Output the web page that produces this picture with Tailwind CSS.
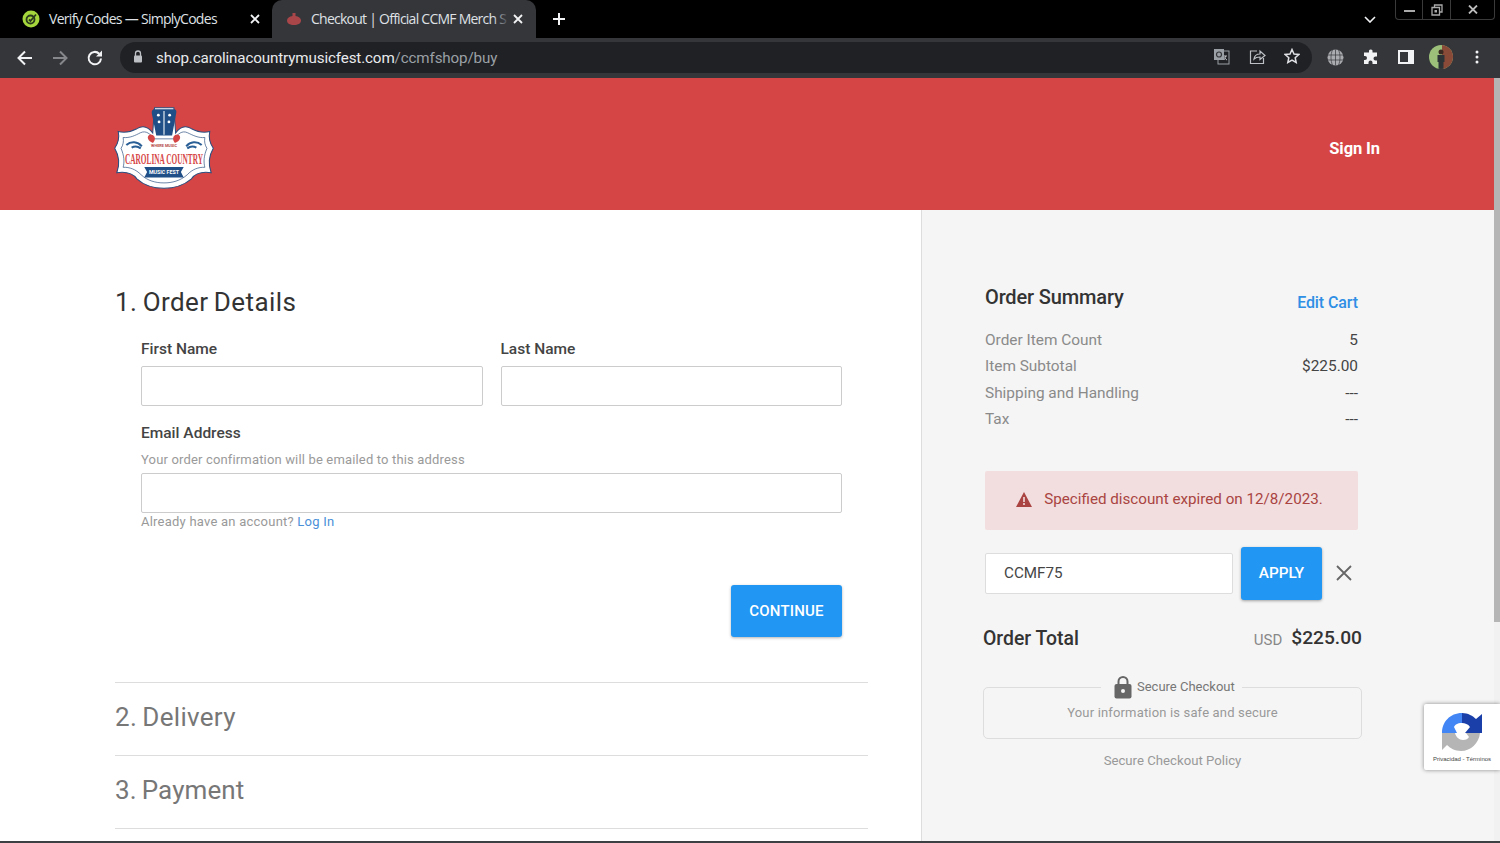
<!DOCTYPE html>
<html lang="en"><head><meta charset="utf-8"><title>Checkout</title>
<script src="https://cdn.jsdelivr.net/npm/@tailwindcss/browser@4"></script></head>
<body class="m-0 bg-white">
<div class="w-[1500px] h-[843px] overflow-hidden relative flex flex-col font-['Roboto',sans-serif]">
  <!-- tab strip -->
  <div class="h-[38px] bg-black flex items-start text-[14px] text-[#e8eaed] shrink-0 relative">
    <div class="w-[272px] h-[38px] flex items-center pl-[22px] relative">
      <svg class="w-[18px] h-[18px] mr-[9px]" viewBox="0 0 18 18"><circle cx="9" cy="9" r="8.500" fill="#a5d63c"/><circle cx="8.500" cy="9.500" r="4" fill="none" stroke="#2b3a1c" stroke-width="1.800"/><path d="M7 9.500l1.500 1.500L14 4.500" fill="none" stroke="#2b3a1c" stroke-width="1.800"/></svg>
      <span class="font-['Open_Sans',sans-serif] tracking-[-0.7px] text-[#dfe1e5] mt-[-2px]">Verify Codes — SimplyCodes</span>
      <svg class="absolute left-[250px] top-[14px] w-[10px] h-[10px]" viewBox="0 0 10 10"><path d="M1 1l8 8M9 1L1 9" stroke="#f1f3f4" stroke-width="1.800"/></svg>
    </div>
    <div class="w-[264px] h-[38px] bg-[#35363a] rounded-t-[10px] flex items-center pl-[14px] relative">
      <svg class="w-[16px] h-[14px] mr-[9px]" viewBox="0 0 16 14"><path d="M6.500 1h3v3c3 .6 5.500 2 5.500 4.500 0 3-3 4.500-7 4.500s-7-1.500-7-4.500C1 6 3.500 4.600 6.500 4z" fill="#a8464a"/></svg>
      <span class="font-['Open_Sans',sans-serif] tracking-[-0.75px] text-[#dfe1e5] whitespace-nowrap mt-[-2px]">Checkout | Official CCMF Merch S</span>
      <div class="absolute left-[221px] top-[8px] w-[16px] h-[22px] bg-gradient-to-r from-[#35363a]/0 to-[#35363a]"></div>
      <svg class="absolute left-[241px] top-[14px] w-[10px] h-[10px]" viewBox="0 0 10 10"><path d="M1 1l8 8M9 1L1 9" stroke="#f1f3f4" stroke-width="1.800"/></svg>
    </div>
    <svg class="ml-[16px] mt-[12px] w-[14px] h-[14px]" viewBox="0 0 14 14"><path d="M7 1v12M1 7h12" stroke="#f1f3f4" stroke-width="2"/></svg>
    <svg class="absolute left-[1364px] top-[16px] w-[12px] h-[7px]" viewBox="0 0 12 7"><path d="M1 1l5 5 5-5" fill="none" stroke="#f1f3f4" stroke-width="1.600"/></svg>
    <div class="absolute left-[1395px] top-0 w-[100px] h-[20px] border border-t-0 border-[#3a3a3a] rounded-b-[4px] flex">
      <div class="w-[27px] border-r border-[#3a3a3a] flex items-center justify-center"><div class="w-[11px] h-[2.500px] bg-[#aaa] mt-[3px]"></div></div>
      <div class="w-[28px] border-r border-[#3a3a3a] flex items-center justify-center"><svg class="w-[12px] h-[12px]" viewBox="0 0 12 12"><path d="M3.500 3V1h7.500v7H9M1 3.500h7.500v7.500H1z" fill="none" stroke="#aaa" stroke-width="1.300"/><rect x="3.500" y="6" width="2.500" height="2.500" fill="#aaa"/></svg></div>
      <div class="flex-1 flex items-center justify-center"><svg class="w-[10px] h-[9px]" viewBox="0 0 10 9"><path d="M1 .5l8 8M9 .5l-8 8" stroke="#bbb" stroke-width="1.800"/></svg></div>
    </div>
  </div>
  <!-- toolbar -->
  <div class="h-[40px] bg-[#35363a] shrink-0 relative flex items-center">
    <svg class="absolute left-[16px] top-[11px] w-[18px] h-[18px]" viewBox="0 0 18 18"><path d="M16 9H3M9 2.500 2.500 9 9 15.500" fill="none" stroke="#f1f3f4" stroke-width="2"/></svg>
    <svg class="absolute left-[51px] top-[11px] w-[18px] h-[18px]" viewBox="0 0 18 18"><path d="M2 9h13M9 2.500 15.500 9 9 15.500" fill="none" stroke="#85878a" stroke-width="2"/></svg>
    <svg class="absolute left-[86px] top-[11px] w-[18px] h-[18px]" viewBox="0 0 18 18"><path d="M15 9.500A6.200 6.200 0 1 1 13.200 4.700" fill="none" stroke="#f1f3f4" stroke-width="2"/><path d="M16 1.500V7.500H10z" fill="#f1f3f4"/></svg>
    <div class="absolute left-[120px] top-[4px] w-[1192px] h-[31px] bg-[#202124] rounded-full flex items-center pl-[36px]">
      <svg class="absolute left-[13px] top-[8px] w-[10px] h-[13px]" viewBox="0 0 10 13"><path d="M2.500 6V3.500a2.500 2.500 0 0 1 5 0V6" fill="none" stroke="#bdc1c6" stroke-width="1.300"/><rect x="1" y="5.500" width="8" height="7" rx="1" fill="#bdc1c6"/></svg>
      <span class="text-[15.200px] text-[#e8eaed] tracking-[-0.14px] mt-[1px]">shop.carolinacountrymusicfest.com<span class="text-[#9aa0a6]">/ccmfshop/buy</span></span>
      <svg class="absolute left-[1093px] top-[6px] w-[17px] h-[17px]" viewBox="0 0 17 17"><rect x="5" y="3" width="11" height="13" fill="none" stroke="#9aa0a6"/><rect x="1" y="1" width="10" height="11" fill="#9aa0a6"/><circle cx="6" cy="6.500" r="2.500" fill="none" stroke="#35363a" stroke-width="1.200"/><path d="M11 8h3M12.500 8c0 2-1 3.500-1.500 4M11.500 9.500c.7 1.300 1.500 2 2.500 2.500" stroke="#bdc1c6" fill="none"/></svg>
      <svg class="absolute left-[1129px] top-[6px] w-[17px] h-[17px]" viewBox="0 0 17 17"><path d="M8 3H1.500v12.500h13V10" fill="none" stroke="#bdc1c6" stroke-width="1.200"/><path d="M5 11c.5-3.500 3-5 6-5V3l5 4.500L11 11.500V9c-2.500 0-4.500.5-6 2z" fill="none" stroke="#bdc1c6" stroke-width="1.200"/></svg>
      <svg class="absolute left-[1164px] top-[6px] w-[16px] h-[16px]" viewBox="0 0 16 16"><path d="M8 1.500l2 4.500 4.800.5-3.600 3.200 1 4.800L8 12.100l-4.200 2.400 1-4.800L1.200 6.500 6 6z" fill="none" stroke="#dfe1e5" stroke-width="1.500"/></svg>
    </div>
    <svg class="absolute left-[1327px] top-[11px] w-[17px] h-[17px]" viewBox="0 0 17 17"><circle cx="8.500" cy="8.500" r="8" fill="#a9abae"/><path d="M.5 6h16M.5 11h16M5.500 1c-2 4-2 11 0 15M11.500 1c2 4 2 11 0 15M8.500 .5v16" fill="none" stroke="#35363a" stroke-width=".7"/></svg>
    <svg class="absolute left-[1363px] top-[11px] w-[16px] h-[16px]" viewBox="0 0 16 16"><path d="M6 1.500a2 2 0 0 1 3.500 0V3.500H14v4h-1.500a2 2 0 0 0 0 4H14V15H9.500v-1.500a2 2 0 0 0-4 0V15H1v-4h1a2 2 0 0 0 0-4H1V3.500h5z" fill="#f1f3f4"/></svg>
    <svg class="absolute left-[1398px] top-[12px] w-[16px] h-[14px]" viewBox="0 0 16 14"><path d="M0 0h16v14H0zM2 2v10h8V2z" fill="#f1f3f4" fill-rule="evenodd"/></svg>
    <svg class="absolute left-[1429px] top-[7px] w-[24px] h-[24px]" viewBox="0 0 24 24"><defs><clipPath id="av"><circle cx="12" cy="12" r="12"/></clipPath></defs><g clip-path="url(#av)"><rect width="24" height="24" fill="#9cc07a"/><rect x="13" width="11" height="24" fill="#8a4a38"/><circle cx="12" cy="7" r="2.500" fill="#3a2a22"/><path d="M8.500 10h7v7h-1v7h-5v-7h-1z" fill="#2c3336"/></g></svg>
    <svg class="absolute left-[1475px] top-[12px] w-[4px] h-[14px]" viewBox="0 0 4 14"><circle cx="2" cy="2" r="1.500" fill="#f1f3f4"/><circle cx="2" cy="7" r="1.500" fill="#f1f3f4"/><circle cx="2" cy="12" r="1.500" fill="#f1f3f4"/></svg>
  </div>
  <!-- page -->
  <div class="flex-1 flex min-h-0">
    <div class="w-[1494px] flex flex-col min-w-0">
      <header class="h-[132px] bg-[#d64545] flex items-center justify-between pl-[114px] pr-[114px] pt-[10px] shrink-0">
        <svg class="w-[100px] h-[82px] mt-[-2px]" viewBox="50 28 284 242" preserveAspectRatio="none">
          <path d="M62 100C80 105 100 100 115 92 135 80 150 90 160 105L165 30H220L225 105C235 90 250 80 270 92 285 100 305 105 322 100 318 120 322 135 332 150 318 175 318 200 326 222 300 218 280 225 270 240 245 262 215 268 192 268 168 268 138 262 115 240 104 225 84 218 58 222 66 200 66 175 52 150 62 135 66 120 62 100Z" fill="#fff" stroke="#2a4f80" stroke-width="3"/>
          <path d="M76 118C95 120 110 112 125 104 142 96 152 108 165 122H220C232 108 243 96 259 104 275 112 290 120 308 118 306 130 308 140 314 150 305 172 304 190 308 206 290 205 272 212 258 228 238 246 215 252 192 252 168 252 146 246 127 228 112 212 94 205 76 206 80 190 79 172 70 150 76 140 78 130 76 118Z" fill="none" stroke="#2a4f80" stroke-width="2"/>
          <path d="M165 35H220C228 35 228 42 226 50L215 112H170L158 50C156 42 158 35 165 35Z" fill="#1f4f86"/>
          <circle cx="176" cy="52" r="4" fill="#fff"/><circle cx="208" cy="52" r="4" fill="#fff"/><circle cx="178" cy="72" r="4" fill="#fff"/><circle cx="206" cy="72" r="4" fill="#fff"/><path d="M192 40V110" stroke="#fff" stroke-width="3"/>
          <path d="M165 116c-8-14-26-4-16 10 4 5 12 8 12 8s8-8 4-18zM219 116c8-14 26-4 16 10-4 5-12 8-12 8s-8-8-4-18z" fill="#d64545"/>
          <path d="M85 140c14-12 32-10 44 4M100 148c10-6 18-4 26 2M299 140c-14-12-32-10-44 4M284 148c-10-6-18-4-26 2" fill="none" stroke="#2a5f96" stroke-width="6"/>
          <text x="192" y="145" text-anchor="middle" font-family="Roboto" font-size="11" font-weight="700" fill="#b5484a">WHERE MUSIC</text>
          <text x="192" y="197" text-anchor="middle" font-family="Liberation Serif" font-size="44" textLength="222" lengthAdjust="spacingAndGlyphs" fill="#d64545" font-weight="700">CAROLINA COUNTRY</text>
          <path d="M136 205H248L240 220 248 236H136L144 220Z" fill="#1f4f86"/>
          <text x="192" y="226" text-anchor="middle" font-family="Roboto" font-size="15" font-weight="700" fill="#fff">MUSIC FEST</text>
        </svg>
        <a class="text-[16.500px] font-bold text-white tracking-[-0.1px]">Sign In</a>
      </header>
      <main class="flex-1 flex min-h-0 overflow-hidden">
        <section class="w-[922px] bg-white border-r border-[#ddd] pl-[115px] pr-[53px] pt-[76px] shrink-0">
          <h2 class="text-[26px] leading-[32px] text-[#333] tracking-[0.42px] [word-spacing:-1.500px] h-[32px]">1. Order Details</h2>
          <div class="pl-[26px] pr-[26px]">
            <div class="grid grid-cols-2 gap-x-[18px] mt-[20px]">
              <div><label class="block text-[15.500px] leading-[22px] font-medium text-[#444]">First Name</label><div class="mt-[6px] h-[40px] border border-[#ccc] rounded-[2px]"></div></div>
              <div><label class="block text-[15.500px] leading-[22px] font-medium text-[#444]">Last Name</label><div class="mt-[6px] h-[40px] border border-[#ccc] rounded-[2px]"></div></div>
            </div>
            <label class="block mt-[16px] text-[15.500px] leading-[22px] font-medium text-[#444]">Email Address</label>
            <p class="mt-[6px] text-[13px] leading-[20px] text-[#9a9a9a] tracking-[0.16px]">Your order confirmation will be emailed to this address</p>
            <div class="mt-[3px] h-[40px] border border-[#ccc] rounded-[2px]"></div>
            <p class="mt-[-1px] text-[13px] leading-[20px] text-[#999] tracking-[0.23px]">Already have an account? <a class="text-[#4a90d9]">Log In</a></p>
            <div class="flex justify-end mt-[53px]"><button class="w-[111px] h-[52px] bg-[#2196f3] rounded-[3px] text-white text-[15px] font-medium tracking-[0.2px] shadow-[0_1px_3px_rgba(0,0,0,0.3)]">CONTINUE</button></div>
          </div>
          <div class="mt-[45px] border-t border-[#ddd] h-[73px] pb-[3px] flex items-center"><h2 class="text-[26px] text-[#777] tracking-[0.3px] [word-spacing:-1.500px]">2. Delivery</h2></div>
          <div class="border-t border-[#ddd] h-[73px] pb-[3px] flex items-center"><h2 class="text-[26px] text-[#777] tracking-[0.1px] [word-spacing:-1.500px]">3. Payment</h2></div>
          <div class="border-t border-[#ddd]"></div>
        </section>
        <aside class="flex-1 bg-[#f5f5f5] pl-[61px] pr-[132px] pt-[73px] min-w-0">
          <div class="pl-[2px] pr-[4px]">
            <div class="flex justify-between items-start h-[28px]">
              <h3 class="text-[20px] leading-[28px] font-medium text-[#333] tracking-[-0.15px]">Order Summary</h3>
              <a class="text-[16px] leading-[24px] mt-[8px] font-medium text-[#2f8fe5] tracking-[-0.1px]">Edit Cart</a>
            </div>
            <dl class="mt-[16px] text-[15.400px] leading-[26.400px] text-[#8a8a8a]">
              <div class="flex justify-between"><dt>Order Item Count</dt><dd class="text-[#444]">5</dd></div>
              <div class="flex justify-between"><dt>Item Subtotal</dt><dd class="text-[#444]">$225.00</dd></div>
              <div class="flex justify-between"><dt>Shipping and Handling</dt><dd class="text-[#444]">---</dd></div>
              <div class="flex justify-between"><dt>Tax</dt><dd class="text-[#444]">---</dd></div>
            </dl>
            <div class="mt-[38px] h-[59px] bg-[#f2dede] rounded-[2px] flex items-center justify-center gap-[12px] text-[15.200px] text-[#a94442] pr-[4px] pb-[2px]">
              <svg class="w-[16px] h-[15px]" viewBox="0 0 16 15"><path d="M8 0l8 15H0z" fill="#a94442"/><path d="M7.200 5h1.600v5H7.200zM7.200 11h1.600v2H7.200z" fill="#f2dede"/></svg>
              <span>Specified discount expired on 12/8/2023.</span>
            </div>
            <div class="mt-[17px] flex items-center h-[53px]">
              <div class="w-[248px] h-[41px] bg-white border border-[#ddd] rounded-[2px] pl-[18px] flex items-center text-[15.200px] text-[#444]">CCMF75</div>
              <button class="ml-[8px] w-[81px] h-[53px] bg-[#2196f3] rounded-[3px] text-white text-[15.300px] font-medium shadow-[0_1px_3px_rgba(0,0,0,0.35)]">APPLY</button>
              <svg class="ml-[14px] w-[16px] h-[16px]" viewBox="0 0 16 16"><path d="M1 1l14 14M15 1L1 15" stroke="#666" stroke-width="1.800"/></svg>
            </div>
          </div>
          <div class="flex justify-between items-center mt-[22px] h-[34px]">
            <span class="text-[19.400px] font-medium text-[#333]">Order Total</span>
            <span class="flex items-center gap-[9px]"><span class="text-[15px] text-[#888] mt-[3px]">USD</span><span class="text-[19.200px] font-medium text-[#333]">$225.00</span></span>
          </div>
          <div class="relative mt-[31px] h-[52px] border border-[#ddd] rounded-[5px] text-center">
            <div class="absolute left-[117px] top-[-14px] w-[141px] h-[26px] bg-[#f5f5f5] flex items-center justify-start pl-[13px] gap-[5px] text-[13px] text-[#777]">
              <svg class="w-[18px] h-[24px] shrink-0" viewBox="0 0 18 24"><path d="M4.500 10V6.500a4.500 4.500 0 0 1 9 0V10" fill="none" stroke="#666" stroke-width="2"/><rect x="0.500" y="9" width="17" height="14.500" rx="2" fill="#666"/><circle cx="9" cy="16" r="2" fill="#f5f5f5"/></svg>
              <span class="whitespace-nowrap">Secure Checkout</span>
            </div>
            <p class="mt-[15.500px] text-[13px] leading-[20px] text-[#999] tracking-[0.16px]">Your information is safe and secure</p>
          </div>
          <p class="mt-[12px] text-center text-[13.200px] leading-[20px] text-[#999]">Secure Checkout Policy</p>
        </aside>
      </main>
    </div>
    <div class="w-[6px] flex flex-col bg-[#f1f1f1]"><div class="h-[544px] bg-[#b5b5b5]"></div></div>
  </div>
  <div class="absolute left-0 bottom-0 w-full h-[2px] bg-[#3c4043]"></div>
  <div class="absolute left-[1424px] top-[704px] w-[76px] h-[66px] bg-white shadow-[0_0_4px_rgba(0,0,0,0.45)] rounded-l-[2px]">
    <svg class="absolute left-[17px] top-[8px] w-[42px] h-[42px]" viewBox="0 0 42 42">
      <path d="M1 21C1 10 9 1 21 1v10c-5 0-7 2-8 4l3 6z" fill="#4285f4"/>
      <path d="M21 1c6 0 11 3 14 6l6-5v19H24l5-6c-2-3-5-4-8-4z" fill="#1a3fa8"/>
      <path d="M1 21h13c1 4 4 7 8 7 3 0 5-1 6-3l-3-4h14c-1 10-9 18-19 18-6 0-11-3-14-6l-5 5z" fill="#b5b5b5"/>
    </svg>
    <div class="absolute left-0 right-0 top-[51px] text-center text-[6px] leading-[8px] text-[#444] font-['Liberation_Sans',sans-serif]">Privacidad - Términos</div>
  </div>
</div>
</body></html>
